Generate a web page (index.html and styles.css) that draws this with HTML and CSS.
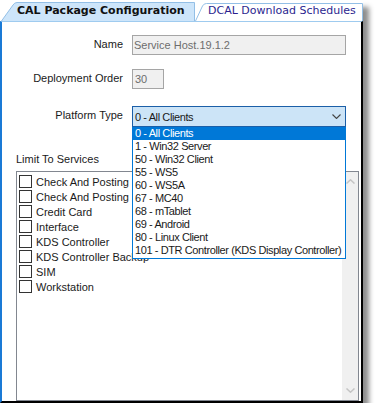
FILE: index.html
```html
<!DOCTYPE html>
<html>
<head>
<meta charset="utf-8">
<link rel="stylesheet" href="styles.css">
</head>
<body>
<div class="window">
  <div class="tabs">
    <div class="tab tab-active">
      <svg class="tab-shape" width="194" height="19" viewBox="0 0 194 19"><path d="M0.5 19 L12 3 Q13.5 0.5 16 0.5 H193.5 V19" fill="#cde5fa" stroke="#93bfe6"/></svg>
      <span class="tab-label">CAL Package Configuration</span>
    </div>
    <div class="tab tab-inactive">
      <svg class="tab-shape" width="168" height="18" viewBox="0 0 168 18"><path d="M0.5 18 L7.5 3 Q8.8 0.5 11.5 0.5 H167.5 V18" fill="#ffffff" stroke="#93bfe6"/></svg>
      <span class="tab-label">DCAL Download Schedules</span>
    </div>
  </div>
  <div class="panel">
    <div class="field field-name">
      <span class="field-label">Name</span>
      <div class="textbox textbox-wide">Service Host.19.1.2</div>
    </div>
    <div class="field field-order">
      <span class="field-label">Deployment Order</span>
      <div class="textbox textbox-narrow">30</div>
    </div>
    <div class="field">
      <span class="field-label">Platform Type</span>
      <div class="combo-wrap">
        <div class="combo">
          <span class="combo-text">0 - All Clients</span>
          <svg class="chevron" width="9" height="5" viewBox="0 0 9 5"><path d="M0.5 0.5 L4.5 4.5 L8.5 0.5" fill="none" stroke="#444" stroke-width="1.1"/></svg>
        </div>
        <div class="dropdown">
          <div class="dd-item selected">0 - All Clients</div>
          <div class="dd-item">1 - Win32 Server</div>
          <div class="dd-item">50 - Win32 Client</div>
          <div class="dd-item">55 - WS5</div>
          <div class="dd-item">60 - WS5A</div>
          <div class="dd-item">67 - MC40</div>
          <div class="dd-item">68 - mTablet</div>
          <div class="dd-item">69 - Android</div>
          <div class="dd-item">80 - Linux Client</div>
          <div class="dd-item">101 - DTR Controller (KDS Display Controller)</div>
        </div>
      </div>
    </div>
    <div class="section-label">Limit To Services</div>
    <div class="listbox">
      <div class="lb-items">
        <div class="lb-row"><span class="checkbox"></span><span>Check And Posting Service</span></div>
        <div class="lb-row"><span class="checkbox"></span><span>Check And Posting Service Backup</span></div>
        <div class="lb-row"><span class="checkbox"></span><span>Credit Card</span></div>
        <div class="lb-row"><span class="checkbox"></span><span>Interface</span></div>
        <div class="lb-row"><span class="checkbox"></span><span>KDS Controller</span></div>
        <div class="lb-row"><span class="checkbox"></span><span>KDS Controller Backup</span></div>
        <div class="lb-row"><span class="checkbox"></span><span>SIM</span></div>
        <div class="lb-row"><span class="checkbox"></span><span>Workstation</span></div>
      </div>
      <div class="scrollbar">
        <div class="sb-btn"><svg width="9" height="5" viewBox="0 0 9 5"><path d="M0.5 4.5 L4.5 0.8 L8.5 4.5" fill="none" stroke="#c4c4c4" stroke-width="1.5"/></svg></div>
        <div class="sb-btn"><svg width="9" height="5" viewBox="0 0 9 5"><path d="M0.5 0.5 L4.5 4.2 L8.5 0.5" fill="none" stroke="#c4c4c4" stroke-width="1.5"/></svg></div>
      </div>
    </div>
  </div>
</div>
</body>
</html>
```
FILE: styles.css
```css
body {
  margin: 0;
  background: #ffffff;
  font-family: "Liberation Sans", Arial, sans-serif;
  font-size: 11px;
  color: #1a1a1a;
}

.window {
  width: 363px;
  box-shadow: 6px 7px 5px rgba(0, 0, 0, 0.45);
}

.tabs {
  display: flex;
  align-items: flex-end;
  height: 21px;
  padding-left: 1px;
}

.tab {
  display: grid;
}

.tab > * {
  grid-area: 1 / 1;
}

.tab-shape {
  display: block;
}

.tab-label {
  font-family: "DejaVu Sans", Verdana, sans-serif;
  font-size: 11px;
  line-height: 13px;
  white-space: nowrap;
  align-self: start;
}

.tab-active .tab-label {
  font-weight: bold;
  color: #111111;
  padding: 2px 0 0 16px;
}

.tab-inactive .tab-label {
  color: #2c1f8f;
  padding: 1px 0 0 13px;
}

.panel {
  box-sizing: border-box;
  height: 382px;
  border-top: 1px solid #9fcbef;
  border-left: 2px solid #1a7ad6;
  border-right: 2px solid #000000;
  border-bottom: 2px solid #000000;
  padding-top: 13px;
  background: #ffffff;
}

.field {
  display: flex;
  align-items: center;
}

.field-name {
  margin-bottom: 14px;
}

.field-order {
  margin-bottom: 17px;
}

.field-label {
  width: 130px;
  box-sizing: border-box;
  padding-right: 9px;
  text-align: right;
  line-height: 13px;
  margin-bottom: 2px;
  white-space: nowrap;
}

.textbox {
  box-sizing: border-box;
  height: 20px;
  border: 1px solid #a5a5a5;
  background: #f0f0f0;
  color: #6d6d6d;
  line-height: 18px;
  padding-left: 1px;
}

.textbox-wide {
  width: 214px;
}

.textbox-narrow {
  width: 32px;
  padding-left: 2px;
}

.combo-wrap {
  position: relative;
}

.combo {
  box-sizing: border-box;
  width: 214px;
  height: 21px;
  border: 1px solid #1b5fa8;
  background: #cce4f7;
  display: flex;
  align-items: center;
  padding: 0 4px 0 2px;
  letter-spacing: -0.4px;
}

.combo-text {
  flex: 1;
  white-space: nowrap;
}

.chevron {
  display: block;
}

.dropdown {
  position: absolute;
  top: 100%;
  left: 0;
  z-index: 2;
  box-sizing: border-box;
  width: 214px;
  border: 1px solid #0078d7;
  border-top: none;
  background: #ffffff;
  padding-bottom: 1px;
  letter-spacing: -0.4px;
}

.dd-item {
  height: 13px;
  line-height: 13px;
  padding-left: 2px;
  white-space: nowrap;
  overflow: hidden;
}

.dd-item.selected {
  background: #0078d7;
  color: #ffffff;
}

.section-label {
  margin: 26px 0 0 14px;
  line-height: 13px;
}

.listbox {
  box-sizing: border-box;
  margin: 5px 0 0 14px;
  width: 343px;
  height: 230px;
  border: 1px solid #828790;
  display: flex;
}

.lb-items {
  flex: 1;
  padding: 2px 0 0 2px;
  overflow: hidden;
}

.lb-row {
  display: flex;
  align-items: center;
  gap: 4px;
  height: 15px;
  white-space: nowrap;
}

.checkbox {
  flex: none;
  box-sizing: border-box;
  width: 13px;
  height: 13px;
  border: 1px solid #333333;
  background: #ffffff;
}

.scrollbar {
  width: 16px;
  background: #f0f0f0;
  display: flex;
  flex-direction: column;
  justify-content: space-between;
}

.sb-btn {
  height: 19px;
  display: flex;
  align-items: center;
  justify-content: center;
}

.sb-btn svg {
  display: block;
}
```
